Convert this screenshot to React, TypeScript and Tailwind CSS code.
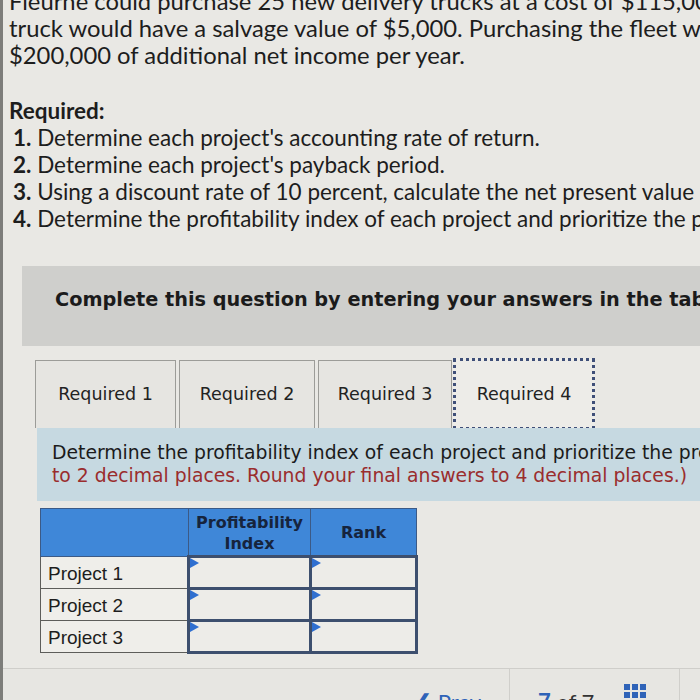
import React from "react";

const rows = ["Project 1", "Project 2", "Project 3"];

const tabs = ["Required 1", "Required 2", "Required 3", "Required 4"];

// small blue marker in the corner of an answer box
const Marker: React.FC = () => (
    <svg className="absolute left-0 top-0" width="9" height="10" viewBox="0 0 9 10">
        <path d="M0 0 L9 5 L0 10 Z" fill="#2f6fd0" />
    </svg>
);

const App: React.FC = () => {
    return (
        <div className="w-[700px] h-[700px] overflow-hidden bg-[#e9e8e4] border-l-[3px] border-[#7d7d7a] flex flex-col">
            {/* --- Problem text --- */}
            <div className="font-['Lato',sans-serif] text-[22.5px] leading-[27px] text-[#1d1d1d] pl-[6px] -mt-[12px]">
                <div className="text-[23.8px]">
                    <p className="whitespace-nowrap">Fleurne could purchase 25 new delivery trucks at a cost of $115,000</p>
                    <p className="whitespace-nowrap">truck would have a salvage value of $5,000. Purchasing the fleet would</p>
                    <p className="whitespace-nowrap">$200,000 of additional net income per year.</p>
                </div>
                <p className="font-bold mt-[28px]">Required:</p>
                <ol className="pl-[4px]">
                    <li className="whitespace-nowrap"><b>1.</b> Determine each project's accounting rate of return.</li>
                    <li className="whitespace-nowrap"><b>2.</b> Determine each project's payback period.</li>
                    <li className="whitespace-nowrap"><b>3.</b> Using a discount rate of 10 percent, calculate the net present value of each project.</li>
                    <li className="whitespace-nowrap"><b>4.</b> Determine the profitability index of each project and prioritize the projects.</li>
                </ol>
            </div>

            {/* --- Instruction box --- */}
            <div className="ml-[19px] mt-[34px] h-[80px] bg-[#cfcfcc] flex items-center pl-[33px] pb-[12px] shrink-0">
                <span className="font-['DejaVu_Sans',sans-serif] font-bold text-[19.3px] text-[#1b1b1b] whitespace-nowrap">
                    Complete this question by entering your answers in the tabs below.
                </span>
            </div>

            {/* --- Tabs --- */}
            <div className="flex ml-[32px] mt-[12px] h-[70px] items-end shrink-0 font-['DejaVu_Sans',sans-serif] text-[17.5px] text-[#222]">
                {tabs.map((t, i) =>
                    i < 3 ? (
                        <div
                            key={t}
                            className={`h-[68px] border border-[#9c9c98] border-b-0 bg-[#e6e5e1] flex items-center justify-center mr-[3px] ${i === 0 ? "w-[141px]" : i === 1 ? "w-[136px]" : "w-[134px]"}`}
                        >
                            {t}
                        </div>
                    ) : (
                        <div
                            key={t}
                            className="w-[142px] h-[72px] border-[3px] border-dotted border-[#3f4f78] bg-[#edece8] flex items-center justify-center -ml-[2px] mb-[-2px]"
                        >
                            {t}
                        </div>
                    )
                )}
            </div>

            {/* --- Info band --- */}
            <div className="ml-[34px] h-[73px] bg-[#c6d9e1] pl-[15px] pt-[13px] font-['DejaVu_Sans',sans-serif] text-[18.8px] leading-[23px] shrink-0">
                <p className="whitespace-nowrap text-[#1b1b1b]">Determine the profitability index of each project and prioritize the projects. (Round</p>
                <p className="whitespace-nowrap text-[#9a2d2d]">to 2 decimal places. Round your final answers to 4 decimal places.)</p>
            </div>

            {/* --- Answer table --- */}
            <table className="ml-[37px] mt-[7px] w-[378px] border-collapse shrink-0">
                <thead>
                    <tr className="bg-[#3f87d8] h-[48px]">
                        <th className="w-[148px] border border-[#3c5a86]"></th>
                        <th className="w-[122px] border border-[#3c5a86] font-['DejaVu_Sans',sans-serif] font-bold text-[16px] leading-[21px] text-[#16243d] align-top pt-[3px]">
                            Profitability
                            <br />
                            Index
                        </th>
                        <th className="border border-[#3c5a86] font-['DejaVu_Sans',sans-serif] font-bold text-[16px] text-[#16243d] align-top pt-[12px]">
                            Rank
                        </th>
                    </tr>
                </thead>
                <tbody>
                    {rows.map((r) => (
                        <tr key={r} className="h-[32px]">
                            <td className="border border-[#5d5d5a] bg-[#efeeea] pl-[7px] pt-[3px] font-['Liberation_Sans',sans-serif] text-[19px] leading-[26px] text-[#1d1d1d]">
                                {r}
                            </td>
                            <td className="relative border-[3px] border-[#3d4f6e] bg-[#edece8]">
                                <Marker />
                            </td>
                            <td className="relative border-[3px] border-[#3d4f6e] bg-[#edece8]">
                                <Marker />
                            </td>
                        </tr>
                    ))}
                </tbody>
            </table>

            {/* --- Footer nav --- */}
            <div className="mt-[14px] border-t border-[#cfceca] flex-1 flex bg-[#e7e6e2]">
                <div className="w-[507px] border-r border-[#d0cfcb] flex items-end justify-end pr-[28px]">
                    <span className="font-['Lato',sans-serif] text-[22px] text-[#2f63b8] translate-y-[16px]">
                        &#10094; Prev
                    </span>
                </div>
                <div className="w-[170px] border-r border-[#d0cfcb] flex items-end pl-[28px] gap-[30px]">
                    <span className="font-['Lato',sans-serif] text-[22px] text-[#333] translate-y-[16px]">
                        <b className="text-[#2f63b8]">7</b> of 7
                    </span>
                    <span className="grid grid-cols-3 gap-[2px] translate-y-[4px]">
                        {Array.from({ length: 9 }).map((_, i) => (
                            <span key={i} className="w-[6px] h-[6px] bg-[#2f63b8]" />
                        ))}
                    </span>
                </div>
            </div>
        </div>
    );
};

export default App;
